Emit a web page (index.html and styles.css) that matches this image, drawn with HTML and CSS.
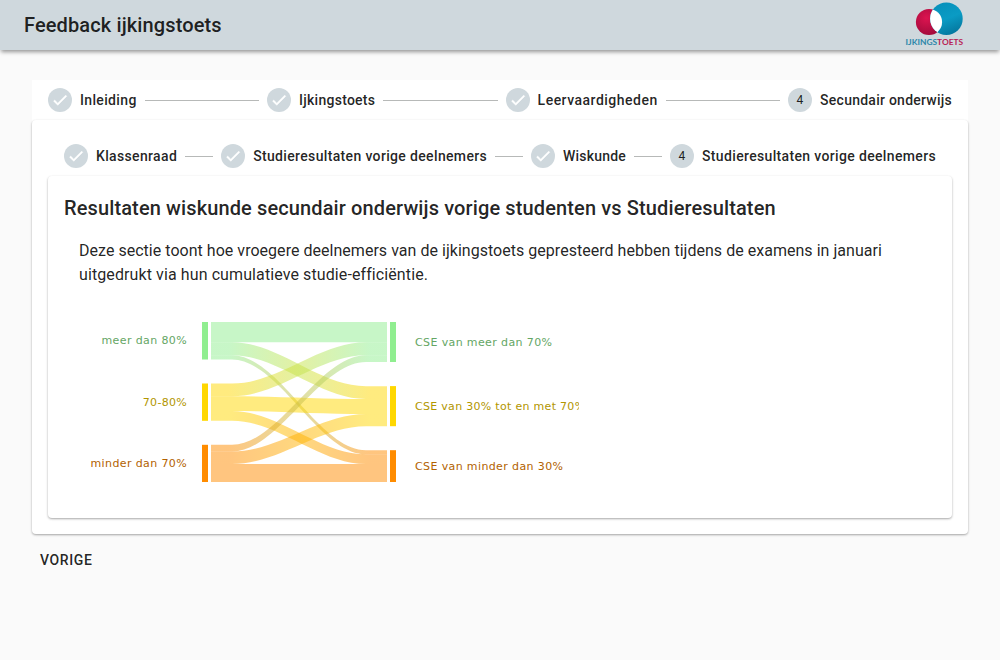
FILE: index.html
```html
<!DOCTYPE html>
<html lang="nl">
<head>
<meta charset="utf-8">
<title>Feedback ijkingstoets</title>
<link rel="stylesheet" href="styles.css">
</head>
<body>
<svg class="defs" width="0" height="0" aria-hidden="true">
  <symbol id="check" viewBox="0 0 24 24"><path d="M21 7L9 19l-5.5-5.5 1.41-1.41L9 16.17 19.59 5.59z"/></symbol>
</svg>
<header class="toolbar">
  <h1 class="toolbar-title">Feedback ijkingstoets</h1>
  <svg class="logo" width="60" height="46" viewBox="0 0 60 46" role="img" aria-label="Ijkingstoets">
    <defs>
      <radialGradient id="logo-red" cx=".4" cy=".35" r=".65"><stop offset="0" stop-color="#dc1450"/><stop offset="1" stop-color="#a50b3c"/></radialGradient>
      <linearGradient id="logo-blue" x1=".3" y1="0" x2=".7" y2="1"><stop offset="0" stop-color="#0690bb"/><stop offset=".5" stop-color="#0a9bc4"/><stop offset="1" stop-color="#04759c"/></linearGradient>
      <clipPath id="logo-clip"><circle cx="24" cy="20" r="13.1"/></clipPath>
    </defs>
    <circle cx="24" cy="20" r="13.1" fill="url(#logo-red)"/>
    <circle cx="41.4" cy="16.7" r="16.3" fill="url(#logo-blue)"/>
    <circle cx="41.4" cy="16.7" r="16.3" fill="#fff" clip-path="url(#logo-clip)"/>
    <text class="logo-text" x=".6" y="43.4" textLength="57.6" lengthAdjust="spacingAndGlyphs"><tspan fill="#2b86a9">IJKINGS</tspan><tspan fill="#b92356">TOETS</tspan></text>
  </svg>
</header>
<main class="content">
  <section class="stepper">
    <div class="steps">
      <div class="step"><span class="badge"><svg class="check"><use href="#check"/></svg></span><span class="wide">Inleiding</span></div>
      <span class="line"></span>
      <div class="step"><span class="badge"><svg class="check"><use href="#check"/></svg></span>Ijkingstoets</div>
      <span class="line"></span>
      <div class="step"><span class="badge"><svg class="check"><use href="#check"/></svg></span><span class="wider">Leervaardigheden</span></div>
      <span class="line"></span>
      <div class="step"><span class="badge">4</span>Secundair onderwijs</div>
    </div>
    <div class="card outer">
      <div class="steps">
        <div class="step"><span class="badge"><svg class="check"><use href="#check"/></svg></span><span class="wide">Klassenraad</span></div>
        <span class="line"></span>
        <div class="step"><span class="badge"><svg class="check"><use href="#check"/></svg></span><span class="wide">Studieresultaten vorige deelnemers</span></div>
        <span class="line"></span>
        <div class="step"><span class="badge"><svg class="check"><use href="#check"/></svg></span><span class="tight">Wiskunde</span></div>
        <span class="line"></span>
        <div class="step"><span class="badge">4</span><span class="wide">Studieresultaten vorige deelnemers</span></div>
      </div>
      <div class="card inner">
        <h2 class="card-title">Resultaten wiskunde secundair onderwijs vorige studenten vs Studieresultaten</h2>
        <p class="intro">Deze sectie toont hoe vroegere deelnemers van de ijkingstoets gepresteerd hebben tijdens de examens in januari <span class="intro-end">uitgedrukt via hun cumulatieve studie-efficiëntie.</span></p>
        <svg class="chart" width="500" height="200" viewBox="79 302 500 200">
          <defs>
            <linearGradient id="gy" gradientUnits="userSpaceOnUse" x1="211" x2="387" y1="0" y2="0"><stop offset=".1" stop-color="#90ee90"/><stop offset=".9" stop-color="#ffd700"/></linearGradient>
            <linearGradient id="go" gradientUnits="userSpaceOnUse" x1="211" x2="387" y1="0" y2="0"><stop offset=".1" stop-color="#90ee90"/><stop offset=".9" stop-color="#ff8c00"/></linearGradient>
            <linearGradient id="yg" gradientUnits="userSpaceOnUse" x1="211" x2="387" y1="0" y2="0"><stop offset=".1" stop-color="#ffd700"/><stop offset=".9" stop-color="#90ee90"/></linearGradient>
            <linearGradient id="yo" gradientUnits="userSpaceOnUse" x1="211" x2="387" y1="0" y2="0"><stop offset=".1" stop-color="#ffd700"/><stop offset=".9" stop-color="#ff8c00"/></linearGradient>
            <linearGradient id="og" gradientUnits="userSpaceOnUse" x1="211" x2="387" y1="0" y2="0"><stop offset=".1" stop-color="#ff8c00"/><stop offset=".9" stop-color="#90ee90"/></linearGradient>
            <linearGradient id="oy" gradientUnits="userSpaceOnUse" x1="211" x2="387" y1="0" y2="0"><stop offset=".1" stop-color="#ff8c00"/><stop offset=".9" stop-color="#ffd700"/></linearGradient>
          </defs>
          <g class="links">
            <path fill="#90ee90" d="M211 322H387V342.3H211Z"/>
            <path fill="url(#gy)" d="M211 342.3H232C279 342.3 319 386.2 366 386.2H387V399H366C319 399 279 355.3 232 355.3H211Z"/>
            <path fill="url(#go)" d="M211 355.3H232C279 355.3 319 450.3 366 450.3H387V454.3H366C319 454.3 279 359.5 232 359.5H211Z"/>
            <path fill="url(#yg)" d="M211 383.5H232C279 383.5 319 342.3 366 342.3H387V355.2H366C319 355.2 279 396.3 232 396.3H211Z"/>
            <path fill="#ffd700" d="M211 396.3H232C279 396.3 319 399 366 399H387V414H366C319 414 279 411 232 411H211Z"/>
            <path fill="url(#yo)" d="M211 411H232C279 411 319 454.3 366 454.3H387V464H366C319 464 279 420.8 232 420.8H211Z"/>
            <path fill="url(#og)" d="M211 444.8H232C279 444.8 319 355.2 366 355.2H387V362H366C319 362 279 451.5 232 451.5H211Z"/>
            <path fill="url(#oy)" d="M211 451.5H232C279 451.5 319 414 366 414H387V426.2H366C319 426.2 279 464.1 232 464.1H211Z"/>
            <path fill="#ff8c00" d="M211 464.1H387V482H211Z"/>
          </g>
          <g fill="#90ee90"><rect x="202" y="322" width="6" height="37.5"/><rect x="390" y="322" width="6" height="40"/></g>
          <g fill="#ffd700"><rect x="202" y="383.5" width="6" height="37.3"/><rect x="390" y="386.1" width="6" height="40.1"/></g>
          <g fill="#ff8c00"><rect x="202" y="444.8" width="6" height="37.2"/><rect x="390" y="450.2" width="6" height="31.8"/></g>
          <g class="labels">
            <text class="green end" x="187" y="344">meer dan 80%</text>
            <text class="gold end" x="187" y="406">70-80%</text>
            <text class="orange end" x="187" y="467">minder dan 70%</text>
            <text class="green" x="415" y="346">CSE van meer dan 70%</text>
            <text class="gold" x="415" y="410">CSE van 30% tot en met 70%</text>
            <text class="orange" x="415" y="470">CSE van minder dan 30%</text>
          </g>
        </svg>
      </div>
    </div>
  </section>
  <button class="back" type="button">Vorige</button>
</main>
</body>
</html>
```
FILE: styles.css
```css
* { box-sizing: border-box; }
body {
  margin: 0;
  background: #fafafa;
  color: rgba(0, 0, 0, .87);
  font-family: Roboto, sans-serif;
}
.defs { display: block; }
.toolbar {
  display: flex;
  align-items: center;
  justify-content: space-between;
  height: 50px;
  padding: 0 35px 0 24px;
  background: #cfd8dd;
  box-shadow: 0 3px 4px -1px rgba(0, 0, 0, .4);
}
.toolbar-title, .card-title {
  margin: 0;
  font-size: 20px;
  font-weight: 500;
  line-height: 32px;
  letter-spacing: .12px;
}
.logo-text { font: 700 7.4px Lato, sans-serif; }
.content { padding: 30px 32px 0; }
.stepper { background: #fff; border-radius: 0 0 4px 4px; }
.steps {
  display: flex;
  align-items: center;
  gap: 8px;
  height: 40px;
  padding: 0 16px;
}
.step {
  display: flex;
  align-items: center;
  gap: 8px;
  font-size: 14px;
  font-weight: 500;
  line-height: 20px;
  letter-spacing: .25px;
  white-space: nowrap;
}
.wide { letter-spacing: .345px; }
.wider { letter-spacing: .49px; }
.tight { letter-spacing: .2px; }
.line { flex: 1; height: 1px; margin-top: 1px; background: #b7b9b8; }
.badge {
  display: flex;
  align-items: center;
  justify-content: center;
  width: 24px;
  height: 24px;
  border-radius: 50%;
  background: #cfd8dd;
  font-size: 12px;
  font-weight: 400;
}
.check { width: 18px; height: 18px; fill: #fff; stroke: #fff; stroke-width: .7px; }
.card {
  border-radius: 4px;
  background: #fff;
  box-shadow: 0 1px 3px rgba(0, 0, 0, .12), 0 1px 2px rgba(0, 0, 0, .24);
}
.outer { height: 414px; padding: 16px; }
.inner { height: 342px; padding: 16px; }
.intro {
  margin: 15px 15px 0;
  font-size: 16px;
  line-height: 24px;
  letter-spacing: .03px;
}
.intro-end { letter-spacing: .1px; }
.chart { display: block; margin: 15px 0 0 15px; overflow: hidden; }
.links { fill-opacity: .5; }
.labels { font: 11px "DejaVu Sans", sans-serif; letter-spacing: .38px; }
.green { fill: #64a664; }
.gold { fill: #b29600; letter-spacing: .3px; }
.orange { fill: #b26200; }
.end { text-anchor: end; }
.back {
  display: block;
  height: 36px;
  margin-top: 8px;
  padding: 0 8px;
  border: 0;
  background: none;
  color: inherit;
  font: 500 14px Roboto, sans-serif;
  letter-spacing: .6px;
  text-transform: uppercase;
}
```
